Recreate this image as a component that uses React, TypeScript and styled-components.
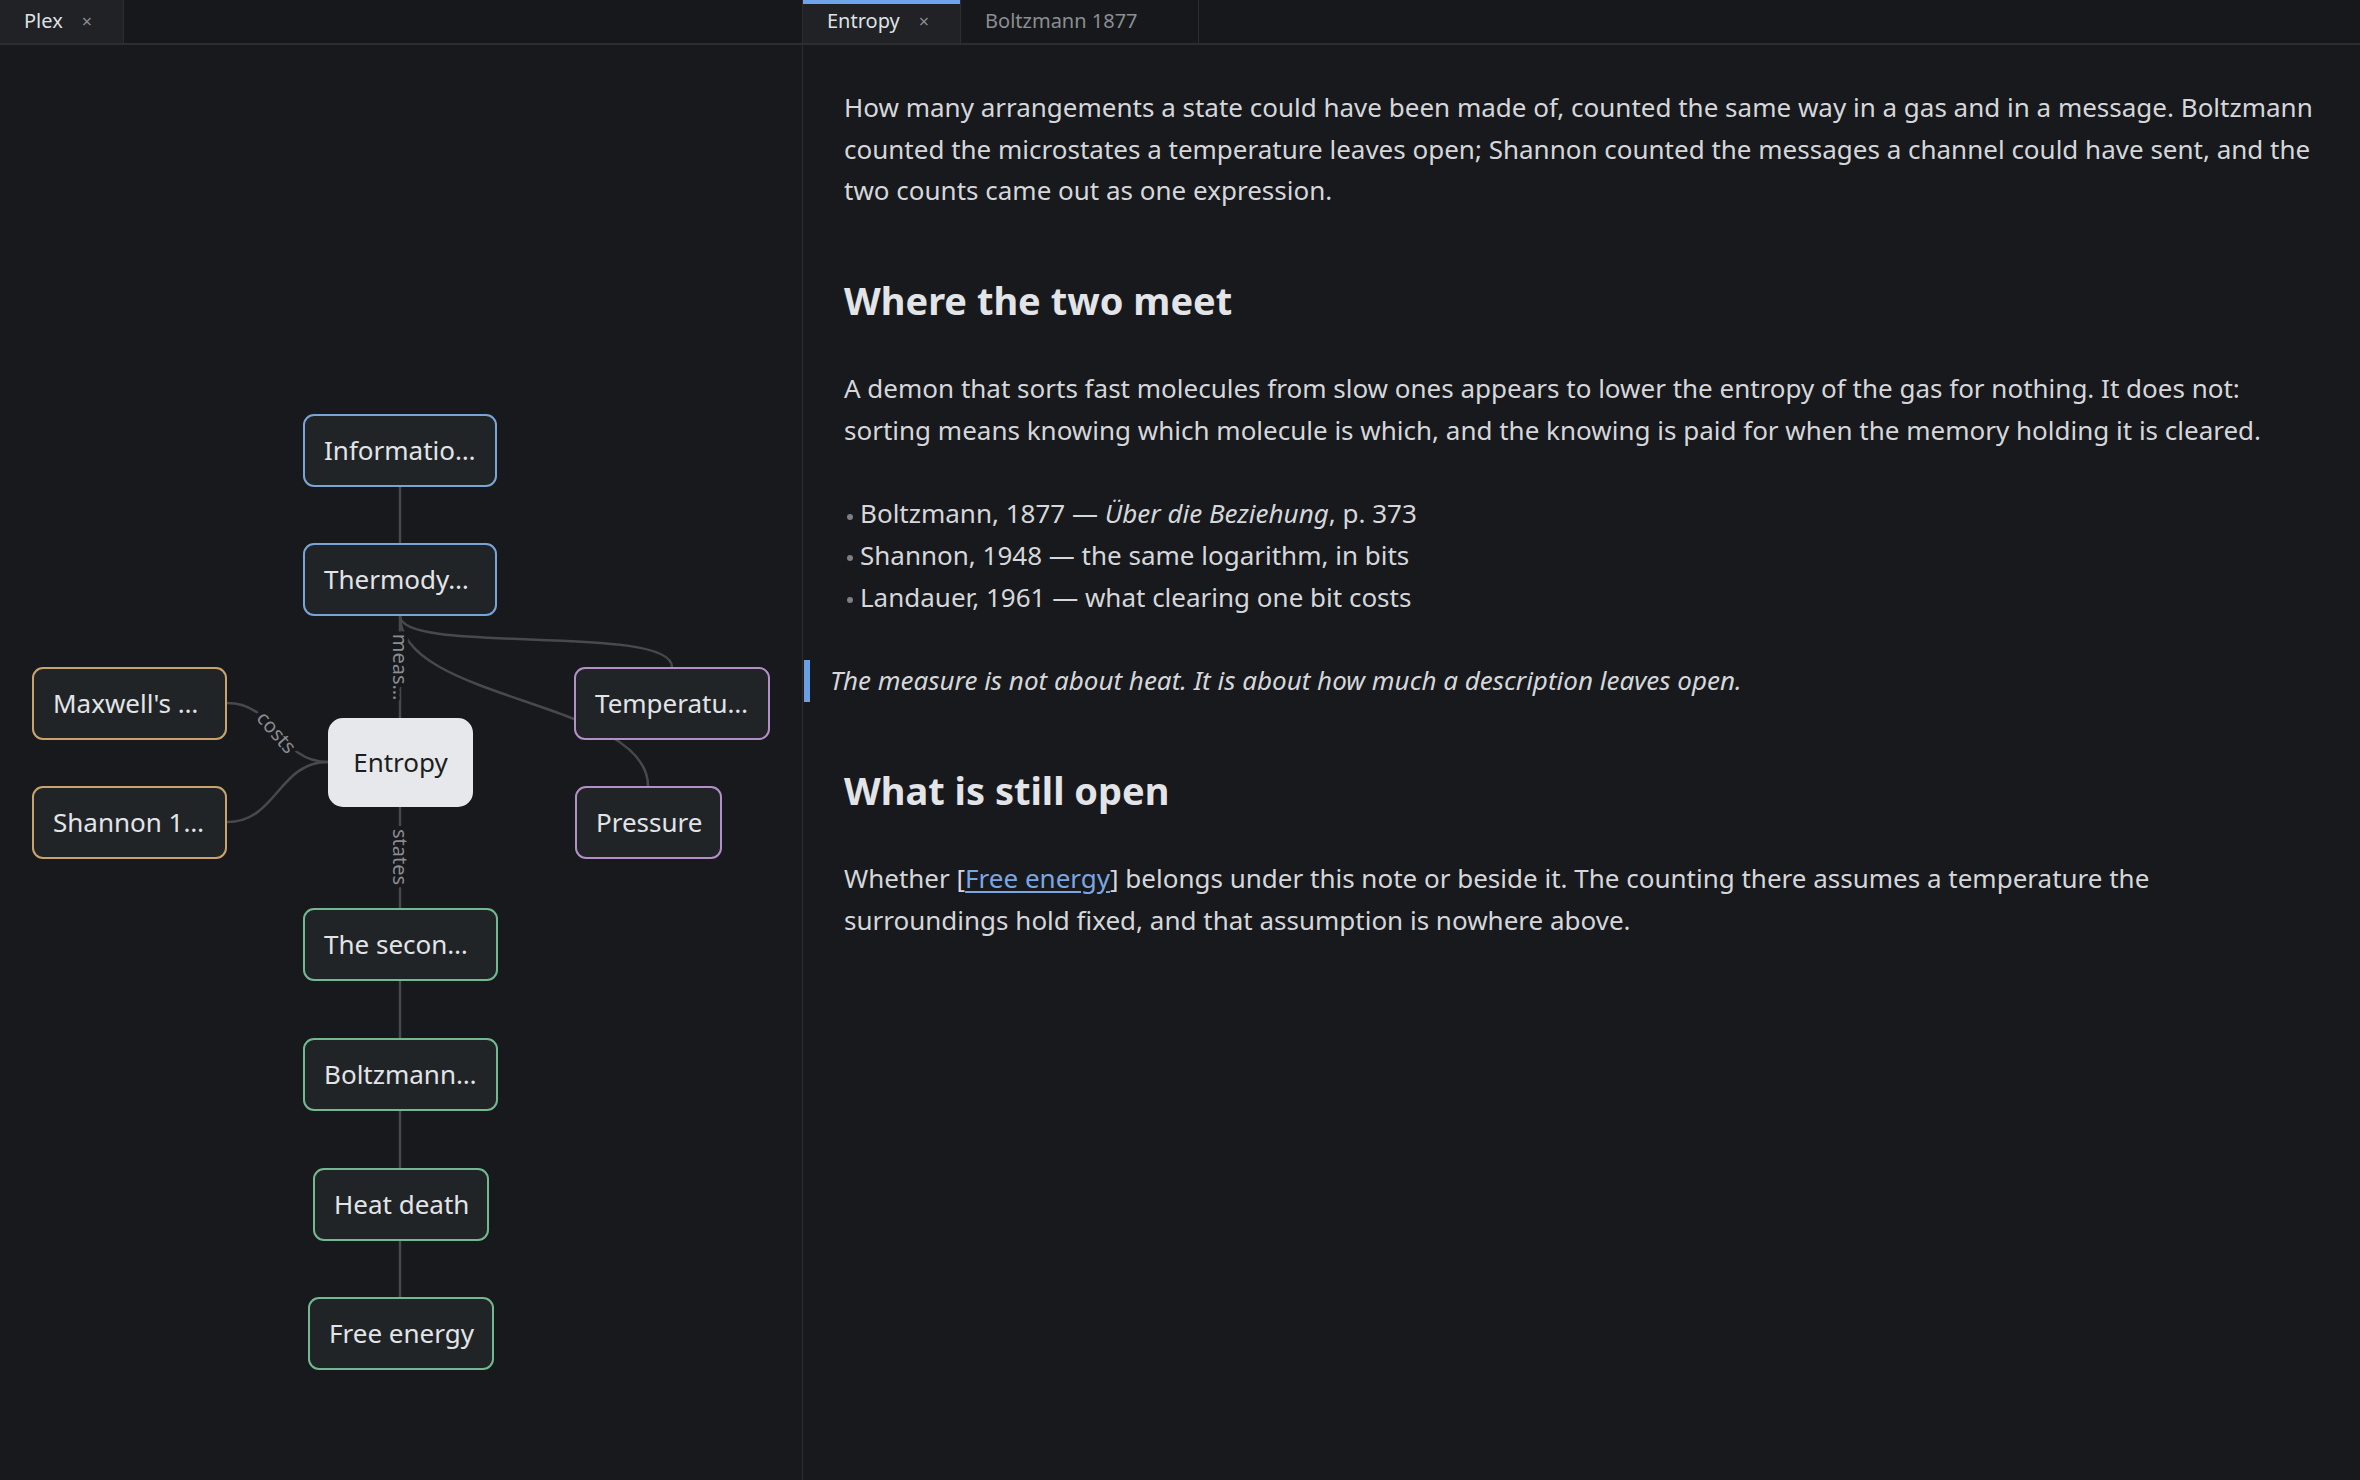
import React from 'react'
import styled, { createGlobalStyle, css } from 'styled-components'

const GlobalStyle = createGlobalStyle`
  html, body {
    margin: 0;
    padding: 0;
    background: #18191c;
  }
  body {
    font-family: 'Noto Sans', 'Open Sans', sans-serif;
    color: #d6d8db;
  }
  * {
    box-sizing: border-box;
  }
`

// the graph canvas starts under the tab bar, node data is in page coords
const CANVAS_TOP = 45

type Tone = 'blue' | 'tan' | 'purple' | 'green' | 'focus'

const tones: Record<Tone, string> = {
  blue: '#7ba4d6',
  tan: '#c8a36d',
  purple: '#b28fc6',
  green: '#72b891',
  focus: '#e7e8eb'
}

type GraphNode = { label: string; x: number; y: number; w: number; h: number; tone: Tone }

const nodes: GraphNode[] = [
  { label: 'Informatio…', x: 303, y: 414, w: 194, h: 73, tone: 'blue' },
  { label: 'Thermody…', x: 303, y: 543, w: 194, h: 73, tone: 'blue' },
  { label: "Maxwell's …", x: 32, y: 667, w: 195, h: 73, tone: 'tan' },
  { label: 'Shannon 1…', x: 32, y: 786, w: 195, h: 73, tone: 'tan' },
  { label: 'Temperatu…', x: 574, y: 667, w: 196, h: 73, tone: 'purple' },
  { label: 'Pressure', x: 575, y: 786, w: 147, h: 73, tone: 'purple' },
  { label: 'Entropy', x: 328, y: 718, w: 145, h: 89, tone: 'focus' },
  { label: 'The secon…', x: 303, y: 908, w: 195, h: 73, tone: 'green' },
  { label: 'Boltzmann…', x: 303, y: 1038, w: 195, h: 73, tone: 'green' },
  { label: 'Heat death', x: 313, y: 1168, w: 176, h: 73, tone: 'green' },
  { label: 'Free energy', x: 308, y: 1297, w: 186, h: 73, tone: 'green' }
]

const edges: string[] = [
  'M400,487 L400,543',
  'M400,616 L400,718',
  'M400,616 C400,655 672,623 672,667',
  'M400,616 C400,701 648,701 648,786',
  'M227,703 C277,703 278,762 328,762',
  'M227,822 C277,822 278,762 328,762',
  'M400,807 L400,908',
  'M400,981 L400,1038',
  'M400,1111 L400,1168',
  'M400,1241 L400,1297'
]

const edgeLabels = [
  { text: 'meas…', x: 400, y: 667, angle: 90 },
  { text: 'costs', x: 277, y: 732, angle: 49 },
  { text: 'states', x: 400, y: 857, angle: 90 }
]

const Workspace = styled.div`
  display: grid;
  grid-template-columns: 803px 1fr;
  height: 100vh;
  overflow: hidden;
`

const Pane = styled.section<{ $divider?: boolean }>`
  display: flex;
  flex-direction: column;
  min-width: 0;
  ${(p) =>
    p.$divider &&
    css`
      border-right: 1px solid #2b2d31;
    `}
`

const TabBar = styled.div`
  display: flex;
  height: 45px;
  flex-shrink: 0;
  background: #17181b;
  border-bottom: 2px solid #2b2d31;
`

const Tab = styled.div<{ $active?: boolean; $focused?: boolean }>`
  display: flex;
  align-items: center;
  gap: 19px;
  padding: 0 31px 2px 24px;
  font-size: 20px;
  color: ${(p) => (p.$active ? '#dfe1e4' : '#8b8e93')};
  background: ${(p) => (p.$active ? '#202225' : 'transparent')};
  border-right: 1px solid #2b2d31;
  box-shadow: ${(p) => (p.$focused ? 'inset 0 4px 0 #6ea4ea' : 'none')};
`

const Close = styled.span<{ $hidden?: boolean }>`
  font-size: 18px;
  color: #8b8e93;
  visibility: ${(p) => (p.$hidden ? 'hidden' : 'visible')};
`

const GraphCanvas = styled.div`
  position: relative;
  flex: 1;
  overflow: hidden;
`

const Edges = styled.svg`
  position: absolute;
  left: 0;
  top: 0;
`

const EdgePath = styled.path`
  fill: none;
  stroke: #47494d;
  stroke-width: 2.5;
`

const EdgeLabel = styled.text`
  font-family: 'Noto Sans', sans-serif;
  font-size: 20px;
  fill: #8a8c91;
  stroke: #18191c;
  stroke-width: 8px;
  paint-order: stroke;
`

const Node = styled.div<{ $x: number; $y: number; $w: number; $h: number; $tone: Tone }>`
  position: absolute;
  left: ${(p) => p.$x}px;
  top: ${(p) => p.$y - CANVAS_TOP}px;
  width: ${(p) => p.$w}px;
  height: ${(p) => p.$h}px;
  display: flex;
  align-items: center;
  justify-content: flex-start;
  padding: 0 18px 2px 19px;
  border: 2px solid ${(p) => tones[p.$tone]};
  border-radius: 11px;
  background: #212427;
  color: #e2e4e7;
  font-size: 26px;
  white-space: nowrap;
  overflow: hidden;
  ${(p) =>
    p.$tone === 'focus' &&
    css`
      justify-content: center;
      padding: 0 0 2px;
      background: #e7e8eb;
      color: #1c1e21;
      border-radius: 15px;
    `}
`

const Note = styled.article`
  flex: 1;
  padding: 42px 41px 0;
  font-size: 26px;
  line-height: 1.6;
  color: #d5d7da;
`

const Paragraph = styled.p`
  margin: 0 0 42px;
`

const Heading = styled.h2`
  margin: 65px 0 44px;
  font-size: 38px;
  font-weight: 700;
  line-height: 1.25;
  color: #e2e4e7;
`

const List = styled.ul`
  margin: 0 0 42px;
  padding: 0;
  list-style: none;
`

const Item = styled.li`
  &::before {
    content: '';
    display: inline-block;
    width: 6px;
    height: 6px;
    margin: 0 7px 0 3px;
    border-radius: 50%;
    background: #7c7f84;
    vertical-align: middle;
  }
`

const Quote = styled.blockquote`
  margin: 0 0 42px -40px;
  padding-left: 20px;
  border-left: 6px solid #6b9fe3;
  font-style: italic;
`

const Link = styled.a`
  color: #7aa7e2;
  text-decoration: underline;
  text-underline-offset: 3px;
`

export default function App() {
  return (
    <>
      <GlobalStyle />
      <Workspace>
        <Pane $divider>
          <TabBar>
            <Tab $active>
              Plex <Close>×</Close>
            </Tab>
          </TabBar>
          <GraphCanvas>
            <Edges width={802} height={1435} viewBox={`0 ${CANVAS_TOP} 802 1435`}>
              {edges.map((d) => (
                <EdgePath key={d} d={d} />
              ))}
              {edgeLabels.map((l) => (
                <EdgeLabel
                  key={l.text}
                  x={l.x}
                  y={l.y}
                  textAnchor="middle"
                  dominantBaseline="central"
                  transform={`rotate(${l.angle} ${l.x} ${l.y})`}
                >
                  {l.text}
                </EdgeLabel>
              ))}
            </Edges>
            {nodes.map((n) => (
              <Node key={n.label} $x={n.x} $y={n.y} $w={n.w} $h={n.h} $tone={n.tone}>
                {n.label}
              </Node>
            ))}
          </GraphCanvas>
        </Pane>
        <Pane>
          <TabBar>
            <Tab $active $focused>
              Entropy <Close>×</Close>
            </Tab>
            <Tab>
              Boltzmann 1877 <Close $hidden>×</Close>
            </Tab>
          </TabBar>
          <Note>
            <Paragraph>
              How many arrangements a state could have been made of, counted the same way in a gas and in
              a message. Boltzmann counted the microstates a temperature leaves open; Shannon counted the
              messages a channel could have sent, and the two counts came out as one expression.
            </Paragraph>
            <Heading>Where the two meet</Heading>
            <Paragraph>
              A demon that sorts fast molecules from slow ones appears to lower the entropy of the gas for
              nothing. It does not: sorting means knowing which molecule is which, and the knowing is paid
              for when the memory holding it is cleared.
            </Paragraph>
            <List>
              <Item>
                Boltzmann, 1877 — <em>Über die Beziehung</em>, p. 373
              </Item>
              <Item>Shannon, 1948 — the same logarithm, in bits</Item>
              <Item>Landauer, 1961 — what clearing one bit costs</Item>
            </List>
            <Quote>The measure is not about heat. It is about how much a description leaves open.</Quote>
            <Heading>What is still open</Heading>
            <Paragraph>
              Whether [<Link href="#free-energy">Free energy</Link>] belongs under this note or beside it.
              The counting there assumes a temperature the surroundings hold fixed, and that assumption is
              nowhere above.
            </Paragraph>
          </Note>
        </Pane>
      </Workspace>
    </>
  )
}
